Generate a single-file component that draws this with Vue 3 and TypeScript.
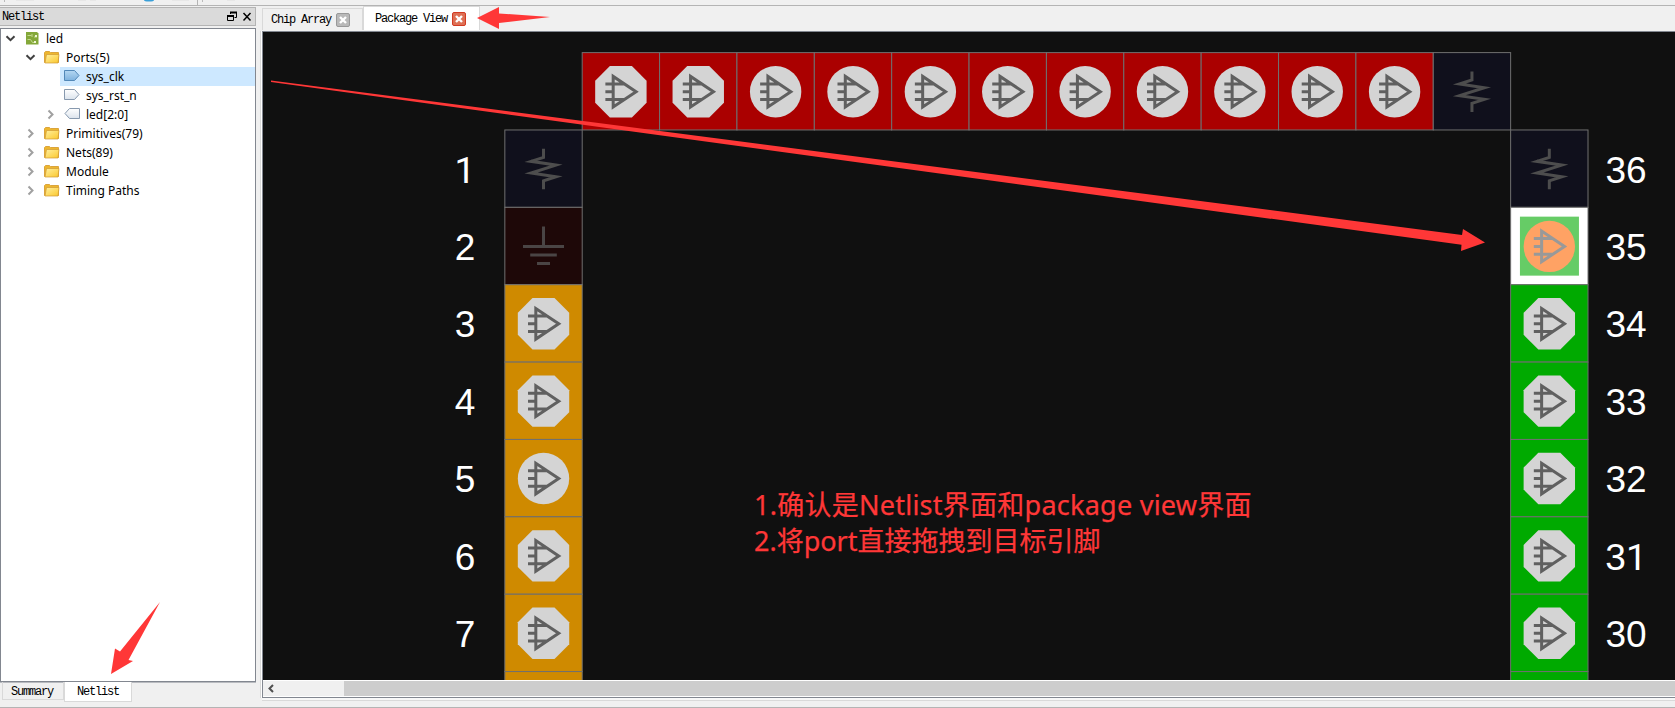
<script setup lang="ts">
type Kind = 'oct' | 'circle' | 'res' | 'gnd' | 'target'
interface Pin { x: number; y: number; fill: string; kind: Kind; label?: string; lx?: number }

const S = 77.37
const X0 = 319.2
const Y0 = 20.6
const pins: Pin[] = []
for (let i = 0; i < 11; i++) {
  pins.push({ x: X0 + i * S, y: Y0, fill: '#aa0000', kind: i < 2 ? 'oct' : 'circle' })
}
pins.push({ x: X0 + 11 * S, y: Y0, fill: '#10101c', kind: 'res' })
const left: Kind[] = ['res', 'gnd', 'oct', 'oct', 'circle', 'oct', 'oct', 'oct']
const right: Kind[] = ['res', 'target', 'oct', 'oct', 'oct', 'oct', 'oct', 'oct']
const base: Partial<Record<Kind, string>> = { res: '#10101c', gnd: '#1e0808', target: '#ffffff' }
left.forEach((kind, i) => {
  pins.push({ x: X0 - S, y: Y0 + (i + 1) * S, fill: base[kind] ?? '#cf8a00', kind, label: i < 7 ? String(i + 1) : undefined, lx: 202 })
})
right.forEach((kind, i) => {
  pins.push({ x: X0 + 12 * S, y: Y0 + (i + 1) * S, fill: base[kind] ?? '#00aa00', kind, label: i < 7 ? String(36 - i) : undefined, lx: 1363 })
})

const folders = ['Primitives(79)', 'Nets(89)', 'Module', 'Timing Paths']
interface Row { text: string; level: number; icon: 'chip' | 'folder' | 'in' | 'out'; arrow?: 'open' | 'closed'; selected?: boolean }
const rows: Row[] = [
  { text: 'led', level: 0, icon: 'chip', arrow: 'open' },
  { text: 'Ports(5)', level: 1, icon: 'folder', arrow: 'open' },
  { text: 'sys_clk', level: 2, icon: 'in', selected: true },
  { text: 'sys_rst_n', level: 2, icon: 'in' },
  { text: 'led[2:0]', level: 2, icon: 'out', arrow: 'closed' },
  ...folders.map((text): Row => ({ text, level: 1, icon: 'folder', arrow: 'closed' })),
]
</script>

<template>
  <div class="app">
    <div class="strip">
      <svg width="1675" height="6">
        <path d="M4.5 0v2M202.500 0v2" stroke="#bbb" />
        <path d="M16 0h18M78 0h8M90 0h6M172 0h17M227 0h8" stroke="#dedede" />
        <path d="M144 0h10a5 1.500 0 0 1-10 0" fill="#3a9fd8" />
        <path d="M197.500 0v5" stroke="#b4b4b4" />
        <path d="M0 5.500h1675" stroke="#b4b4b4" />
      </svg>
    </div>
    <div class="body">
      <aside class="dock">
        <header class="title">
          <span>Netlist</span>
          <svg width="29" height="16" viewBox="0 0 29 16" fill="none" stroke="#000">
            <path d="M4.500 5v-1.500h6v5H8.500" /><path d="M4 3.500h7" stroke-width="2" />
            <path d="M1.500 7h6v4.500h-6z" /><path d="M1 7h7" stroke-width="2" />
            <path d="M17.500 4l7 7.500M24.500 4l-7 7.500" stroke-width="1.500" />
          </svg>
        </header>
        <div class="tree">
          <div v-for="row in rows" :key="row.text" class="row" :class="'l' + row.level">
            <svg class="chev" width="19" height="19" fill="none" stroke-width="2">
              <path v-if="row.arrow === 'open'" d="M5.500 7.200l4 4 4-4" stroke="#404040" />
              <path v-else-if="row.arrow === 'closed'" d="M7.500 5.500l4 4-4 4" stroke="#a0a0a0" />
            </svg>
            <div class="item" :class="{ selected: row.selected }">
              <svg width="20" height="19">
                <template v-if="row.icon === 'chip'">
                  <path d="M6 3h11l1.500 1.500V15.500H6z" fill="#84a83a" />
                  <path d="M7.500 6.500h4m-4 4h3l2 3h2M14 8h3M12 5v3" fill="none" stroke="#c3d88e" />
                  <path d="M15 6h2v2h-2zM14 12h2v2h-2z" fill="#eef5d5" />
                </template>
                <template v-else-if="row.icon === 'folder'">
                  <path d="M4.500 4.500l1-1h4l1 1h8v10h-14z" fill="#edb62e" stroke="#dba43c" />
                  <path d="M6.500 6.500h12.500l-1 8.500h-13z" fill="url(#gold)" stroke="#d09a35" stroke-width=".7" />
                </template>
                <path v-else-if="row.icon === 'in'" d="M4.500 3.500h10l4.500 5-4.500 5h-10z" :fill="row.selected ? 'url(#blue)' : 'url(#silver)'" :stroke="row.selected ? '#5288b8' : '#8799ae'" />
                <path v-else d="M19.500 3.500h-10l-4.500 5 4.500 5h10z" fill="url(#silver)" stroke="#8799ae" />
              </svg>
              <span>{{ row.text }}</span>
            </div>
          </div>
        </div>
        <div class="bottom-tabs">
          <div class="btab">Summary</div>
          <div class="btab on">Netlist</div>
        </div>
      </aside>

      <main class="editor">
        <nav class="tabs">
          <div class="tab"><span>Chip Array</span><i class="x"><svg width="12" height="12"><path d="M3 3l6 6M9 3l-6 6" stroke="#fff" stroke-width="2.400" /></svg></i></div>
          <div class="tab on"><span>Package View</span><i class="x hot"><svg width="12" height="12"><path d="M3 3l6 6M9 3l-6 6" stroke="#fff" stroke-width="2.400" /></svg></i></div>
        </nav>
        <div class="frame">
          <svg class="canvas" width="1412" height="648" viewBox="0 0 1412 648">
            <defs>
              <linearGradient id="gold" x2="1" y2="1"><stop stop-color="#fff0a0" /><stop offset="1" stop-color="#fbc72b" /></linearGradient>
              <linearGradient id="blue" x2="0" y2="1"><stop stop-color="#b4d7f2" /><stop offset="1" stop-color="#7fb2de" /></linearGradient>
              <linearGradient id="silver" x2="0" y2="1"><stop stop-color="#fff" /><stop offset="1" stop-color="#dbe3ec" /></linearGradient>
            </defs>
            <g v-for="(p, i) in pins" :key="i">
              <g :transform="`translate(${p.x} ${p.y})`">
                <rect :width="S" :height="S" :fill="p.fill" stroke="#707070" />
                <rect v-if="p.kind === 'target'" x="9.300" y="9.300" width="59" height="59" fill="#66cc66" />
                <g :transform="`translate(${S / 2} ${S / 2 + 0.4})`" fill="none" stroke-miterlimit="20">
                  <path v-if="p.kind === 'res'" d="M0-20.300v8.600L-12.500-7.700 12.500-4 -12.500 4 12.500 7.700 0 11.700v8.600" stroke="#4d4d4d" stroke-width="3" />
                  <path v-else-if="p.kind === 'gnd'" d="M0-20V0M-20.500 0h41M-13.300 8.500h26.600M-6.500 17h13" stroke="#4a4545" stroke-width="3" />
                  <template v-else>
                    <path v-if="p.kind === 'oct'" d="M-11-25.700h22L25.700-11v22L11 25.700h-22L-25.700 11v-22z" fill="#d4d4d4" />
                    <circle v-else r="25.700" :fill="p.kind === 'target' ? '#ffa264' : '#d4d4d4'" />
                    <path d="M-7.700-15.300v30.600L15.200 0zM-15.500-7.800H4M-15.500 0h8M-15.500 7.800H4" :stroke="p.kind === 'target' ? '#999' : '#606060'" stroke-width="3" />
                  </template>
                </g>
              </g>
              <text v-if="p.label" :x="p.lx" :y="p.y + 52.700" class="num" text-anchor="middle"><tspan v-for="(d, k) in p.label" :key="k" :class="{ one: d === '1' }">{{ d }}</tspan></text>
            </g>
          </svg>
          <div class="scroll">
            <svg width="81" height="16"><path d="M10 4L6.500 7.500l3.500 3.500" fill="none" stroke="#505050" stroke-width="2" /></svg>
            <div class="thumb"></div>
          </div>
        </div>
      </main>
    </div>

    <div class="note"><div class="n1">1.确认是Netlist界面和package view界面</div><div class="n2">2.将port直接拖拽到目标引脚</div></div>
    <svg class="marks" width="1675" height="708" fill="#ff3737">
      <path d="M271 80.500L1462 235 1463 229 1485 242.500 1461 251 1461.500 244.800 271 82z" />
      <path d="M477 18l22-11v6.500l51 3.500-51 6v6z" />
      <path d="M160 602l-31.500 58 4.500 1L111 674l4-25.500 5 3z" />
    </svg>
  </div>
</template>

<style>
body { margin: 0; overflow: hidden; }
</style>
<style scoped>
.app { position: relative; width: 1675px; height: 708px; overflow: hidden; background: #f0f0f0; display: flex; flex-direction: column; color: #000; }
.app::after { content: ''; position: absolute; left: 0; right: 0; top: 707px; height: 1px; background: #b4b4b4; }
svg { display: block; flex: none; }
.strip { height: 6px; flex: none; }
.body { display: flex; gap: 4px; flex: 1; }
.dock { width: 256px; display: flex; flex-direction: column; padding-top: 1px; box-sizing: border-box; }
.title, .tab, .btab { font: 12px/14px "Liberation Mono", monospace; letter-spacing: -1.2px; white-space: pre; }
.title { height: 19px; box-sizing: border-box; border: 1px solid #b4b4b4; border-left: 0; background: #dadada; display: flex; justify-content: space-between; align-items: center; padding-left: 2px; }
.tree { margin-top: 2px; height: 654px; border: 1px solid #828790; background: #fff; box-sizing: border-box; box-shadow: 0 1px #b9bbc0; flex: none; }
.row { height: 19px; display: flex; }
.l1 { padding-left: 20px; }
.l2 { padding-left: 40px; }
.item { flex: 1; display: flex; font: 12px/20px "Noto Sans", "Open Sans", sans-serif; white-space: pre; }
.item span { margin-left: 6px; }
.selected { background: #cde8ff; }
.bottom-tabs { display: flex; padding-left: 2px; align-items: flex-start; }
.btab { box-sizing: border-box; width: 62px; height: 18px; border: 1px solid #d9d9d9; border-top: 0; text-align: center; line-height: 20px; padding-right: 2px; }
.btab.on { width: 68px; height: 20px; background: #fff; line-height: 21px; position: relative; padding-right: 0; }
.editor { flex: 1; display: flex; flex-direction: column; min-width: 0; }
.tabs { height: 24px; display: flex; align-items: flex-end; padding-left: 2px; }
.tab { box-sizing: border-box; width: 101px; height: 22px; border: 1px solid #d9d9d9; border-bottom: 0; display: flex; align-items: center; padding-left: 8px; gap: 5px; }
.tab.on { width: 117px; height: 24px; background: #fff; padding-left: 11px; }
.x { width: 12px; height: 12px; border: 1px solid #999; background: #b9b9b9; border-radius: 2px; }
.hot { background: #dd7055; border-color: #d33a22; }
.frame { border: 1px solid #828790; border-right: 0; margin-left: 2px; height: 667px; box-sizing: border-box; margin-top: 1px; box-shadow: -1px 0 #fff, -2px 0 #d9d9d9, 0 2px #f8f8f8, 0 3px #d9d9d9; background: #fff; }
.canvas { background: #101010; }
.num { font: 37px "Liberation Sans", Arial, sans-serif; fill: #fff; }
.one { font-family: Roboto, sans-serif; }
.scroll { display: flex; height: 15px; margin-top: 1px; background: #f0f0f0; }
.thumb { flex: 1; background: #cdcdcd; height: 15px; }
.note { position: absolute; left: 754px; top: 487px; font: 27px/36px "Noto Sans", "Noto Sans CJK SC", sans-serif; color: #ff3737; white-space: pre; -webkit-text-stroke: .25px #ff3737; }
.n1 { letter-spacing: .25px; }
.marks { position: absolute; left: 0; top: 0; pointer-events: none; }
</style>
